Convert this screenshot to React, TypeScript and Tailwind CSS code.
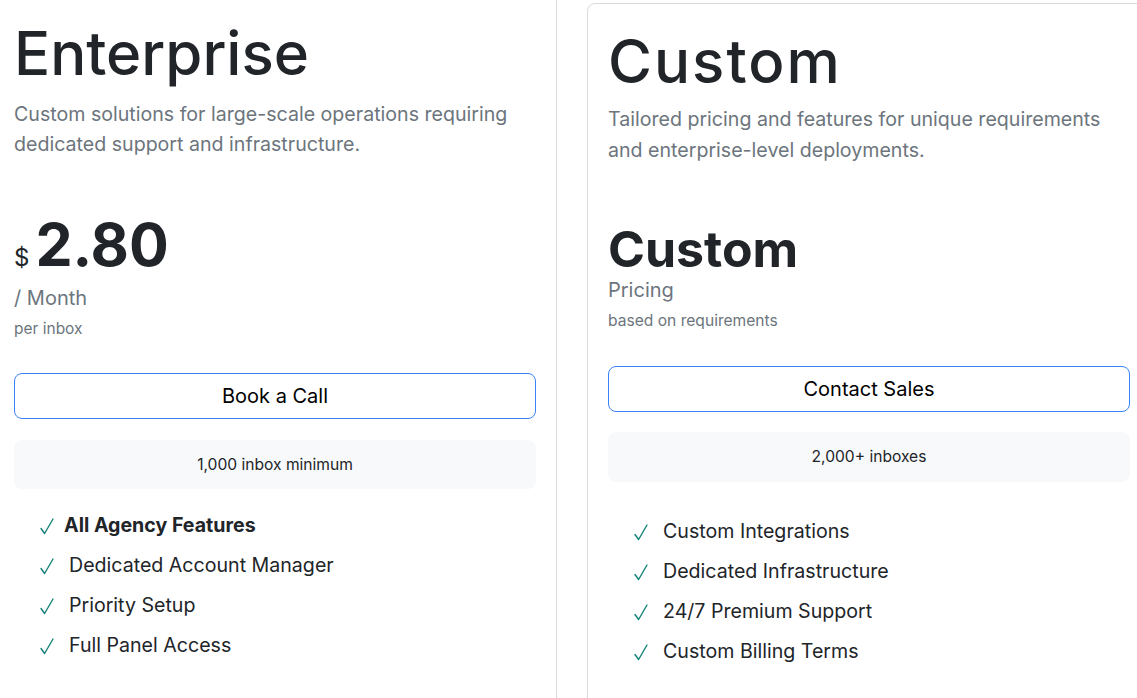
import React from "react";

type Plan = {
  name: string;
  description: string[];
  unit: string;
  note: string;
  cta: string;
  volume: string;
  features: { label: string; bold?: boolean }[];
};

const ENTERPRISE: Plan = {
  name: "Enterprise",
  description: ["Custom solutions for large-scale operations requiring", "dedicated support and infrastructure."],
  unit: "/ Month",
  note: "per inbox",
  cta: "Book a Call",
  volume: "1,000 inbox minimum",
  features: [
    { label: "All Agency Features", bold: true },
    { label: "Dedicated Account Manager" },
    { label: "Priority Setup" },
    { label: "Full Panel Access" },
  ],
};

const CUSTOM: Plan = {
  name: "Custom",
  description: ["Tailored pricing and features for unique requirements", "and enterprise-level deployments."],
  unit: "Pricing",
  note: "based on requirements",
  cta: "Contact Sales",
  volume: "2,000+ inboxes",
  features: [
    { label: "Custom Integrations" },
    { label: "Dedicated Infrastructure" },
    { label: "24/7 Premium Support" },
    { label: "Custom Billing Terms" },
  ],
};

function Check() {
  return (
    <svg width="14" height="17" viewBox="0 0 14 17" fill="none" className="shrink-0 translate-y-[1px]">
      <path d="M1 10.5 L4.6 15.5 L13 1" stroke="#118277" strokeWidth="1.4" strokeLinecap="round" strokeLinejoin="round" />
    </svg>
  );
}

function FeatureList({ features, className }: { features: Plan["features"]; className: string }) {
  return (
    <ul className={`flex flex-col gap-3 ${className}`}>
      {features.map((f) => (
        <li key={f.label} className="flex items-center text-[19.6px] leading-7 text-[#212529]">
          <Check />
          <span className={f.bold ? "ml-[10px] font-bold" : "ml-[15px]"}>{f.label}</span>
        </li>
      ))}
    </ul>
  );
}

export default function App() {
  const plan = ENTERPRISE;
  const alt = CUSTOM;

  return (
    <div className="h-[698px] w-[1137px] overflow-hidden bg-white font-['Inter',sans-serif]">
      <div className="ml-[-7px] flex items-start gap-[30px]">
        {/* enterprise card, scrolled partly out of view */}
        <div className="mt-[-10px] w-[564px] shrink-0 rounded-lg border border-[#d9d9d9] px-5 pt-[26px] pb-12">
          <h2 className="text-[60px] font-medium leading-[72px] text-[#212529]">{plan.name}</h2>
          <p className="mt-[10px] text-[19.6px] leading-[30px] text-[#6c757d]">
            {plan.description[0]}
            <br />
            {plan.description[1]}
          </p>
          <div className="mt-[55px] flex items-baseline text-[#212529]">
            <span className="mr-[6px] text-[24px] leading-none">$</span>
            <span className="text-[59px] font-bold leading-[62px]">2.80</span>
          </div>
          <div className="mt-[8px] text-[20px] leading-7 text-[#6c757d]">{plan.unit}</div>
          <div className="mt-[7px] text-[15.5px] leading-5 text-[#6c757d]">{plan.note}</div>
          <button
            type="button"
            className="mt-[34px] h-[46px] w-full rounded-lg border border-[#3b82f6] bg-white text-[20px] text-black"
          >
            {plan.cta}
          </button>
          <div className="mt-[21px] flex h-[49px] items-center justify-center rounded-lg bg-[#f8f9fa] text-[15.6px] text-[#212529]">
            {plan.volume}
          </div>
          <FeatureList features={plan.features} className="mt-[22px] pl-[26px]" />
        </div>

        <div className="mt-[3px] w-[564px] shrink-0 rounded-lg border border-[#d9d9d9] px-5 pt-[21px] pb-12">
          <h2 className="text-[60px] font-medium leading-[72px] tracking-[2px] text-[#212529]">{alt.name}</h2>
          <p className="mt-[7px] text-[19.6px] leading-[31px] text-[#6c757d]">
            {alt.description[0]}
            <br />
            {alt.description[1]}
          </p>
          <div className="mt-[58px] text-[50px] font-bold leading-none text-[#212529]">Custom</div>
          <div className="mt-[2px] text-[20px] leading-7 text-[#6c757d]">{alt.unit}</div>
          <div className="mt-[7px] text-[15.6px] leading-5 text-[#6c757d]">{alt.note}</div>
          <button
            type="button"
            className="mt-[35px] h-[46px] w-full rounded-lg border border-[#3b82f6] bg-white text-[20px] text-black"
          >
            {alt.cta}
          </button>
          <div className="mt-[20px] flex h-[50px] items-center justify-center rounded-lg bg-[#f8f9fa] text-[15.6px] text-[#212529]">
            {alt.volume}
          </div>
          <FeatureList features={alt.features} className="mt-[35px] pl-[26px]" />
        </div>
      </div>
    </div>
  );
}
